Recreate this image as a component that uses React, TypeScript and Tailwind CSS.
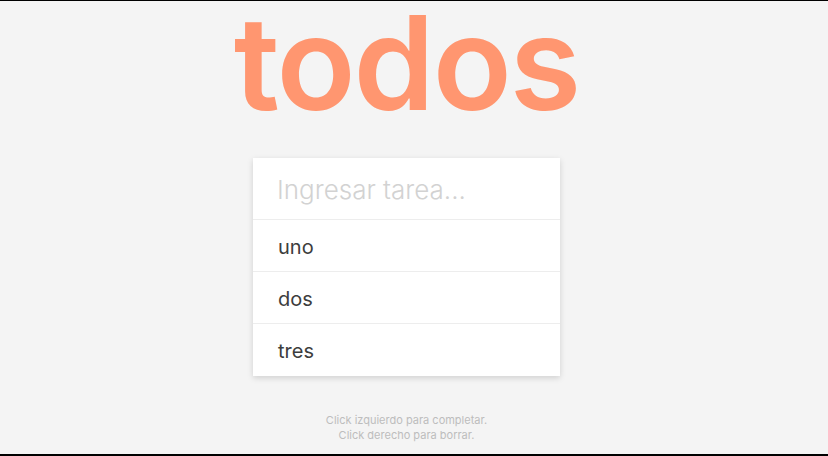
const todos = ["uno", "dos", "tres"];

export default function App() {
  return (
    <div className="h-[456px] w-full border-t border-b-2 border-black bg-[#f4f4f4] font-['Inter',sans-serif]">
      <div className="flex w-[813px] flex-col items-center">
        <h1 className="text-[130px] leading-[124px] font-semibold tracking-[-2px] text-[#ff9670]">todos</h1>

        <div className="mt-[33px] w-[307px] bg-white shadow-[0_2px_6px_rgba(0,0,0,0.15)]">
          <input
            type="text"
            placeholder="Ingresar tarea..."
            className="h-[62px] w-full border-b border-[#ededed] px-6 pt-0.5 text-[26px] font-light text-[#4d4d4d] outline-none placeholder:text-[#d2d2d2]"
          />
          <ul>
            {todos.map((t, i) => (
              <li
                key={t}
                className={
                  "flex h-[52px] items-center px-[25px] pt-0.5 text-[20px] text-[#3d3d3d] " +
                  (i < todos.length - 1 ? "border-b border-[#ededed]" : "")
                }
              >
                {t}
              </li>
            ))}
          </ul>
        </div>

        <div className="mt-[37px] text-center text-[11px] leading-[15px] text-[#bdbdbd]">
          <p>Click izquierdo para completar.</p>
          <p>Click derecho para borrar.</p>
        </div>
      </div>
    </div>
  );
}
